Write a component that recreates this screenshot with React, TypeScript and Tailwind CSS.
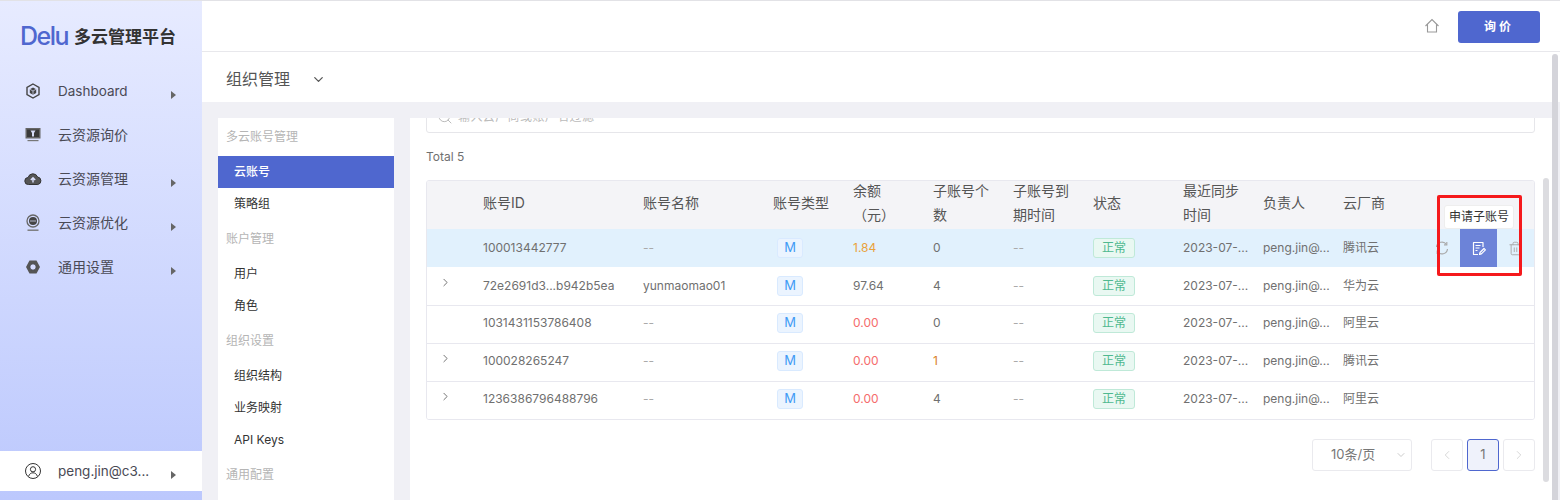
import { ChevronDown, ChevronLeft, ChevronRight, Search, Trash2 } from "lucide-react";

const font = "font-['Inter','Noto_Sans_CJK_SC',sans-serif]";

const columns = "grid grid-cols-[56px_160px_130px_80px_80px_80px_80px_90px_80px_80px_90px_1fr]";

function IconCube() {
  return (
    <svg width="16" height="16" viewBox="0 0 16 16" fill="none">
      <path d="M8 1l6 3.3v7.4L8 15l-6-3.3V4.3z" stroke="#444" strokeWidth="1.4" />
      <path d="M8 4.4l3.2 1.8v3.7L8 11.7 4.8 9.9V6.2z" fill="#444" />
      <path d="M4.8 6.2L8 8l3.2-1.8M8 8v3.6" stroke="#dfe4ff" strokeWidth="0.7" />
    </svg>
  );
}

function IconScreen() {
  return (
    <svg width="16" height="16" viewBox="0 0 16 16" fill="none">
      <rect x="0.5" y="1" width="15" height="10.5" fill="#666" />
      <rect x="2" y="2.5" width="12" height="7.5" fill="#3a3a3a" />
      <path d="M5.5 3.5h5l-1.5 2.5v3.5H7V6z" fill="#d8def8" />
      <rect x="2.5" y="13" width="11" height="1.2" fill="#777" />
    </svg>
  );
}

function IconCloud() {
  return (
    <svg width="18" height="14" viewBox="0 0 18 14" fill="none">
      <path d="M4.5 12.5a3.5 3.5 0 0 1-.4-7A5 5 0 0 1 13.6 5a3.8 3.8 0 0 1 .2 7.5z" fill="#555" stroke="#333" />
      <path d="M9 10.5V6M6.8 8L9 5.8 11.2 8" stroke="#dde2ff" strokeWidth="1.4" />
    </svg>
  );
}

function IconBot() {
  return (
    <svg width="14" height="18" viewBox="0 0 14 18" fill="none">
      <circle cx="7" cy="7" r="6" stroke="#666" strokeWidth="1.3" />
      <circle cx="7" cy="7" r="4" fill="#444" />
      <circle cx="5" cy="7" r="0.7" fill="#dde2ff" />
      <circle cx="7" cy="7" r="0.7" fill="#dde2ff" />
      <circle cx="9" cy="7" r="0.7" fill="#dde2ff" />
      <rect x="1.5" y="15.5" width="11" height="1.4" fill="#777" />
    </svg>
  );
}

function IconHex() {
  return (
    <svg width="16" height="16" viewBox="0 0 16 16" fill="none">
      <path d="M4.5 1.5h7L15 8l-3.5 6.5h-7L1 8z" fill="#555" />
      <circle cx="8" cy="8" r="3.2" fill="#d6dcff" stroke="#333" strokeWidth="0.8" />
    </svg>
  );
}

function IconUser() {
  return (
    <svg width="16" height="16" viewBox="0 0 16 16" fill="none" stroke="#333" strokeWidth="1">
      <circle cx="8" cy="8" r="7.5" />
      <circle cx="8" cy="6.3" r="2.6" />
      <path d="M3.6 13.4c.6-2.4 2.4-3.6 4.4-3.6s3.8 1.2 4.4 3.6" />
    </svg>
  );
}

const navItems = [
  { label: "Dashboard", icon: <IconCube />, arrow: true, size: "text-[13.5px]" },
  { label: "云资源询价", icon: <IconScreen />, arrow: false, size: "text-sm" },
  { label: "云资源管理", icon: <IconCloud />, arrow: true, size: "text-sm" },
  { label: "云资源优化", icon: <IconBot />, arrow: true, size: "text-sm" },
  { label: "通用设置", icon: <IconHex />, arrow: true, size: "text-sm" },
];

const rows = [
  { id: "100013442777", name: "--", balance: "1.84", balanceCls: "text-[#e9a23b]", sub: "0", subCls: "text-[#707070]", vendor: "腾讯云", expand: false },
  { id: "72e2691d3...b942b5ea", name: "yunmaomao01", balance: "97.64", balanceCls: "text-[#707070]", sub: "4", subCls: "text-[#707070]", vendor: "华为云", expand: true },
  { id: "1031431153786408", name: "--", balance: "0.00", balanceCls: "text-[#f56c6c]", sub: "0", subCls: "text-[#707070]", vendor: "阿里云", expand: false },
  { id: "100028265247", name: "--", balance: "0.00", balanceCls: "text-[#f56c6c]", sub: "1", subCls: "text-[#d9822b]", vendor: "腾讯云", expand: true },
  { id: "1236386796488796", name: "--", balance: "0.00", balanceCls: "text-[#f56c6c]", sub: "4", subCls: "text-[#707070]", vendor: "阿里云", expand: true },
];

function Arrow() {
  return <span className="ml-auto mt-[7px] h-0 w-0 border-y-[4px] border-l-[5px] border-y-transparent border-l-[#666]" />;
}

function MenuTitle({ children, cls }: { children: string; cls: string }) {
  return <div className={`pl-2 text-xs leading-[18px] text-[#b5b5b5] ${cls}`}>{children}</div>;
}

function MenuItem({ children, active }: { children: string; active?: boolean }) {
  return (
    <div className={`flex h-8 items-center pl-4 text-xs ${active ? "bg-[#4f67cf] font-medium text-white" : "text-[#333]"}`}>
      {children}
    </div>
  );
}

function Row({ r, index }: { r: (typeof rows)[number]; index: number }) {
  const first = index === 0;
  return (
    <div className={`${columns} h-[38px] items-center text-xs text-[#707070] ${first ? "bg-[#e1f1fd]" : "bg-white"} ${index === 1 ? "pb-[1px]" : ""} ${index > 1 ? "border-t border-[#e8e8ef] pb-[3px]" : ""}`}>
      <div className="pl-[12px]">{r.expand && <ChevronRight size={13} strokeWidth={1.5} className="mb-[6px] text-[#555]" />}</div>
      <div className="whitespace-nowrap">{r.id}</div>
      <div className={r.name === "--" ? "text-[#aaa]" : ""}>{r.name}</div>
      <div className="pl-1">
        <span className="flex h-5 w-[26px] items-center justify-center rounded-[3px] border border-[#d9eaff] bg-[#ebf4ff] text-[13px] text-[#3f9bf5]">M</span>
      </div>
      <div className={r.balanceCls}>{r.balance}</div>
      <div className={r.subCls}>{r.sub}</div>
      <div className="text-[#aaa]">--</div>
      <div>
        <span className="flex h-5 w-[42px] items-center justify-center rounded-[3px] border border-[#bfe9d8] bg-[#e9f8f2] text-[#4fb98f]">正常</span>
      </div>
      <div className="whitespace-nowrap">2023-07-...</div>
      <div className="whitespace-nowrap">peng.jin@...</div>
      <div>{r.vendor}</div>
      {first ? (
        <div className="flex h-[38px] items-center text-[#aaa]">
          <svg width="14" height="14" viewBox="0 0 14 14" fill="none" stroke="currentColor" strokeWidth="1.2" className="ml-[2px]">
            <path d="M1.5 6A5.5 5.5 0 0 1 11.5 3.5M12.5 8A5.5 5.5 0 0 1 2.5 10.5" />
            <path d="M11.8 1v2.8H9M2.2 13v-2.8H5" />
          </svg>
          <span className="ml-[11px] flex h-[38px] w-[37px] items-center justify-center bg-[#6c83d8] text-white">
            <svg width="14" height="15" viewBox="0 0 14 15" fill="none" stroke="currentColor" strokeWidth="1.2" strokeLinejoin="round">
              <path d="M11 6V1.5H1.5v12H6" />
              <path d="M3.5 4.5h5M3.5 7h4M3.5 9.5h2" />
              <path d="M7.5 13.5l.5-2 4-4 1.4 1.4-4 4z" />
            </svg>
          </span>
          <Trash2 size={15} className="ml-[11px]" strokeWidth={1.5} />
        </div>
      ) : (
        <div />
      )}
    </div>
  );
}

export default function App() {
  return (
    <div className={`relative flex h-[500px] w-[1560px] overflow-hidden border-t border-[#e2e2e6] bg-white ${font}`}>
      <aside className="flex w-[202px] shrink-0 flex-col bg-gradient-to-b from-[#e7ebff] to-[#bcc8fd]">
        <div className="flex h-[50px] items-center pl-[20px] pt-[21px]">
          <span className="text-[25px] font-medium tracking-[-1.5px] text-[#4f67cf]">Delu</span>
          <span className="ml-[6px] mt-[3px] text-[17px] font-bold text-[#333]">多云管理平台</span>
        </div>
        <nav className="mt-[18px] flex flex-col">
          {navItems.map((item) => (
            <div key={item.label} className={`flex h-[44px] items-center pl-[24px] pr-[26px] text-[#4a4a55] ${item.size}`}>
              <span className="flex w-[18px] justify-center">{item.icon}</span>
              <span className="ml-4">{item.label}</span>
              {item.arrow && <Arrow />}
            </div>
          ))}
        </nav>
        <div className="mt-[162px] flex h-[40px] items-center bg-white pl-[25px] pr-[26px] text-[13.5px] text-[#4a4a55]">
          <IconUser />
          <span className="ml-[17px] whitespace-nowrap">peng.jin@c3...</span>
          <Arrow />
        </div>
      </aside>

      <div className="flex min-w-0 flex-1 flex-col">
        <header className="flex h-[51px] shrink-0 items-center justify-end border-b border-[#e8e8ec] pr-5">
          <svg width="16" height="16" viewBox="0 0 16 16" fill="none" stroke="#999" strokeWidth="1.1">
            <path d="M1.5 8L8 1.5 14.5 8M3.5 6.5v7.5h9V6.5" />
          </svg>
          <button className="ml-[18px] mt-[2px] h-[32px] w-[82px] rounded-[3px] bg-[#4f67cf] text-xs font-bold tracking-[3px] text-white">询价</button>
        </header>
        <div className="flex h-[50px] shrink-0 items-center pl-6 pt-[4px] text-[#555]">
          <span className="text-base">组织管理</span>
          <ChevronDown size={15} className="ml-[21px]" />
        </div>
        <div className="flex min-h-0 flex-1 gap-4 bg-[#f0f0f5] pl-4 pt-4">
          <div className="h-[400px] w-[176px] shrink-0 bg-white">
            <MenuTitle cls="pt-[10px] pb-[10px]">多云账号管理</MenuTitle>
            <MenuItem active>云账号</MenuItem>
            <MenuItem>策略组</MenuItem>
            <MenuTitle cls="pt-[10px] pb-[10px]">账户管理</MenuTitle>
            <MenuItem>用户</MenuItem>
            <MenuItem>角色</MenuItem>
            <MenuTitle cls="pt-[10px] pb-[10px]">组织设置</MenuTitle>
            <MenuItem>组织结构</MenuItem>
            <MenuItem>业务映射</MenuItem>
            <MenuItem>API Keys</MenuItem>
            <MenuTitle cls="pt-[10px]">通用配置</MenuTitle>
          </div>
          <div className="h-[400px] w-[1142px] shrink-0 overflow-hidden bg-white pl-4 pr-[17px]">
            <div className="-mt-[17px] flex h-[32px] items-center gap-[5px] rounded-[3px] border border-[#e6e6ea] pl-[10px] text-xs tracking-[0.4px] text-[#bbb]">
              <Search size={16} strokeWidth={1} className="text-[#999]" />
              输入云厂商或账户名过滤
            </div>
            <div className="mt-[14px] text-xs leading-[20px] text-[#707070]">Total 5</div>
            <div className="mt-[13px] overflow-hidden rounded-[3px] border border-[#e8e8ef]">
              <div className="flex h-[48px] bg-[#f4f4f7]">
                <div className={`${columns} -mt-[2px] h-[48px] w-full items-center text-sm leading-[24px] text-[#555]`}>
                  <div />
                  <div>账号ID</div>
                  <div>账号名称</div>
                  <div>账号类型</div>
                  <div>余额<br />（元）</div>
                  <div>子账号个<br />数</div>
                  <div>子账号到<br />期时间</div>
                  <div>状态</div>
                  <div>最近同步<br />时间</div>
                  <div>负责人</div>
                  <div>云厂商</div>
                  <div />
                </div>
              </div>
              {rows.map((r, i) => (
                <Row key={r.id} r={r} index={i} />
              ))}
            </div>
            <div className="mt-[19px] flex justify-end gap-1 text-[13px] text-[#777]">
              <div className="mr-[15px] flex h-8 w-[100px] items-center justify-between rounded-[3px] border border-[#eaeaee] pl-[18px] pr-[4px]">
                10条/页
                <ChevronDown size={12} className="text-[#ccc]" />
              </div>
              <div className="flex h-8 w-8 items-center justify-center rounded-[3px] border border-[#eaeaee] text-[#bbb]"><ChevronLeft size={14} strokeWidth={1} /></div>
              <div className="flex h-8 w-8 items-center justify-center rounded-[3px] border border-[#4f67cf] bg-[#eff2fb]">1</div>
              <div className="flex h-8 w-8 items-center justify-center rounded-[3px] border border-[#eaeaee] text-[#bbb]"><ChevronRight size={14} strokeWidth={1} /></div>
            </div>
          </div>
        </div>
      </div>

      {/* tooltip and red highlight box sit over the table */}
      <div className="absolute left-[1444px] top-[204px] flex h-[24px] w-[70px] items-center justify-center rounded-[3px] border border-[#eee] bg-white text-xs text-[#333]">申请子账号</div>
      <div className="absolute left-[1437px] top-[194px] h-[81px] w-[85px] rounded-[2px] border-[3px] border-[#f5191c]" />
      {/* scrollbars */}
      <div className="absolute left-[1543px] top-[177px] h-[304px] w-[6px] rounded-full bg-[#dcdce0]" />
      <div className="absolute left-[1552px] top-[53px] h-[502px] w-[6px] rounded-full bg-[#d4d4da]" />
    </div>
  );
}
